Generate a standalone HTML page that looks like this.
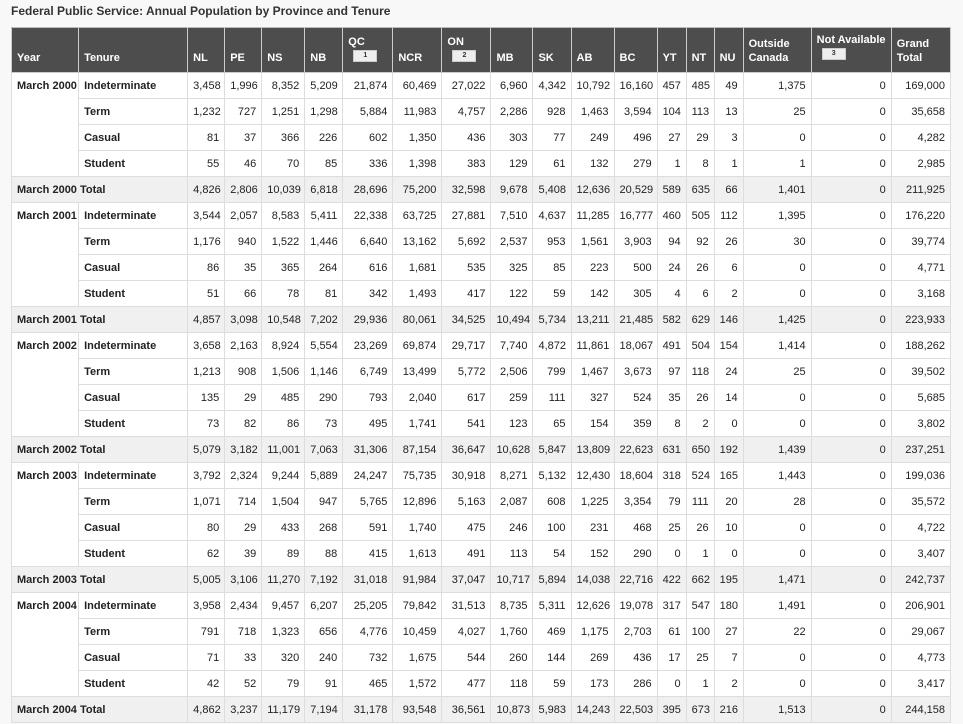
<!DOCTYPE html>
<html><head><meta charset="utf-8"><style>
body{margin:0;background:#f8f8f8;font-family:"Liberation Sans",Arial,sans-serif;font-size:11px;color:#222;width:963px;height:724px;overflow:hidden}
h1{position:absolute;left:11px;top:4px;margin:0;font-size:12px;font-weight:bold;color:#333}
table{position:absolute;left:11px;top:27px;border-collapse:collapse;table-layout:fixed;width:940px}
th{background:#4d4d4d;color:#fff;font-weight:bold;text-align:left;vertical-align:bottom;padding:0 5px 7px;height:37px;box-sizing:border-box;border:1px solid #ccc;border-top:1px solid #bbb;font-size:11px;line-height:14px}
tr.h{height:45px}
th.t{vertical-align:top;padding-top:7px}
.n{display:block;width:22px;height:10px;background:#eee;border:1px solid #ccc;color:#333;font-size:7px;line-height:10px;text-align:center;margin:1px 0 0 5px}
td{height:25px;padding:0 5px;border:1px solid #ddd;background:#fff;text-align:right;vertical-align:middle;line-height:14px;white-space:nowrap;overflow:visible}
td.l{text-align:left;font-weight:bold;vertical-align:top;padding-top:6px;padding-left:5px;padding-right:0}
td.b{text-align:left;font-weight:bold}
tr.tot td{background:#f0f0f0}
</style></head><body>
<h1>Federal Public Service: Annual Population by Province and Tenure</h1>
<table>
<colgroup><col style="width:67px"><col style="width:109px"><col style="width:37px"><col style="width:37px"><col style="width:43px"><col style="width:38px"><col style="width:50px"><col style="width:49px"><col style="width:49px"><col style="width:42px"><col style="width:38px"><col style="width:43px"><col style="width:43px"><col style="width:29px"><col style="width:28px"><col style="width:29px"><col style="width:68px"><col style="width:80px"><col style="width:59px"></colgroup>
<tr class="h"><th>Year</th><th>Tenure</th><th>NL</th><th>PE</th><th>NS</th><th>NB</th><th class="t">QC<span class="n">1</span></th><th>NCR</th><th class="t">ON<span class="n">2</span></th><th>MB</th><th>SK</th><th>AB</th><th>BC</th><th>YT</th><th>NT</th><th>NU</th><th>Outside Canada</th><th class="t" style="padding-top:5px">Not Available<span class="n">3</span></th><th>Grand Total</th></tr>
<tr><td class="l" rowspan="4">March 2000</td><td class="b">Indeterminate</td><td>3,458</td><td>1,996</td><td>8,352</td><td>5,209</td><td>21,874</td><td>60,469</td><td>27,022</td><td>6,960</td><td>4,342</td><td>10,792</td><td>16,160</td><td>457</td><td>485</td><td>49</td><td>1,375</td><td>0</td><td>169,000</td></tr>
<tr><td class="b">Term</td><td>1,232</td><td>727</td><td>1,251</td><td>1,298</td><td>5,884</td><td>11,983</td><td>4,757</td><td>2,286</td><td>928</td><td>1,463</td><td>3,594</td><td>104</td><td>113</td><td>13</td><td>25</td><td>0</td><td>35,658</td></tr>
<tr><td class="b">Casual</td><td>81</td><td>37</td><td>366</td><td>226</td><td>602</td><td>1,350</td><td>436</td><td>303</td><td>77</td><td>249</td><td>496</td><td>27</td><td>29</td><td>3</td><td>0</td><td>0</td><td>4,282</td></tr>
<tr><td class="b">Student</td><td>55</td><td>46</td><td>70</td><td>85</td><td>336</td><td>1,398</td><td>383</td><td>129</td><td>61</td><td>132</td><td>279</td><td>1</td><td>8</td><td>1</td><td>1</td><td>0</td><td>2,985</td></tr>
<tr class="tot"><td class="b" colspan="2">March 2000 Total</td><td>4,826</td><td>2,806</td><td>10,039</td><td>6,818</td><td>28,696</td><td>75,200</td><td>32,598</td><td>9,678</td><td>5,408</td><td>12,636</td><td>20,529</td><td>589</td><td>635</td><td>66</td><td>1,401</td><td>0</td><td>211,925</td></tr>
<tr><td class="l" rowspan="4">March 2001</td><td class="b">Indeterminate</td><td>3,544</td><td>2,057</td><td>8,583</td><td>5,411</td><td>22,338</td><td>63,725</td><td>27,881</td><td>7,510</td><td>4,637</td><td>11,285</td><td>16,777</td><td>460</td><td>505</td><td>112</td><td>1,395</td><td>0</td><td>176,220</td></tr>
<tr><td class="b">Term</td><td>1,176</td><td>940</td><td>1,522</td><td>1,446</td><td>6,640</td><td>13,162</td><td>5,692</td><td>2,537</td><td>953</td><td>1,561</td><td>3,903</td><td>94</td><td>92</td><td>26</td><td>30</td><td>0</td><td>39,774</td></tr>
<tr><td class="b">Casual</td><td>86</td><td>35</td><td>365</td><td>264</td><td>616</td><td>1,681</td><td>535</td><td>325</td><td>85</td><td>223</td><td>500</td><td>24</td><td>26</td><td>6</td><td>0</td><td>0</td><td>4,771</td></tr>
<tr><td class="b">Student</td><td>51</td><td>66</td><td>78</td><td>81</td><td>342</td><td>1,493</td><td>417</td><td>122</td><td>59</td><td>142</td><td>305</td><td>4</td><td>6</td><td>2</td><td>0</td><td>0</td><td>3,168</td></tr>
<tr class="tot"><td class="b" colspan="2">March 2001 Total</td><td>4,857</td><td>3,098</td><td>10,548</td><td>7,202</td><td>29,936</td><td>80,061</td><td>34,525</td><td>10,494</td><td>5,734</td><td>13,211</td><td>21,485</td><td>582</td><td>629</td><td>146</td><td>1,425</td><td>0</td><td>223,933</td></tr>
<tr><td class="l" rowspan="4">March 2002</td><td class="b">Indeterminate</td><td>3,658</td><td>2,163</td><td>8,924</td><td>5,554</td><td>23,269</td><td>69,874</td><td>29,717</td><td>7,740</td><td>4,872</td><td>11,861</td><td>18,067</td><td>491</td><td>504</td><td>154</td><td>1,414</td><td>0</td><td>188,262</td></tr>
<tr><td class="b">Term</td><td>1,213</td><td>908</td><td>1,506</td><td>1,146</td><td>6,749</td><td>13,499</td><td>5,772</td><td>2,506</td><td>799</td><td>1,467</td><td>3,673</td><td>97</td><td>118</td><td>24</td><td>25</td><td>0</td><td>39,502</td></tr>
<tr><td class="b">Casual</td><td>135</td><td>29</td><td>485</td><td>290</td><td>793</td><td>2,040</td><td>617</td><td>259</td><td>111</td><td>327</td><td>524</td><td>35</td><td>26</td><td>14</td><td>0</td><td>0</td><td>5,685</td></tr>
<tr><td class="b">Student</td><td>73</td><td>82</td><td>86</td><td>73</td><td>495</td><td>1,741</td><td>541</td><td>123</td><td>65</td><td>154</td><td>359</td><td>8</td><td>2</td><td>0</td><td>0</td><td>0</td><td>3,802</td></tr>
<tr class="tot"><td class="b" colspan="2">March 2002 Total</td><td>5,079</td><td>3,182</td><td>11,001</td><td>7,063</td><td>31,306</td><td>87,154</td><td>36,647</td><td>10,628</td><td>5,847</td><td>13,809</td><td>22,623</td><td>631</td><td>650</td><td>192</td><td>1,439</td><td>0</td><td>237,251</td></tr>
<tr><td class="l" rowspan="4">March 2003</td><td class="b">Indeterminate</td><td>3,792</td><td>2,324</td><td>9,244</td><td>5,889</td><td>24,247</td><td>75,735</td><td>30,918</td><td>8,271</td><td>5,132</td><td>12,430</td><td>18,604</td><td>318</td><td>524</td><td>165</td><td>1,443</td><td>0</td><td>199,036</td></tr>
<tr><td class="b">Term</td><td>1,071</td><td>714</td><td>1,504</td><td>947</td><td>5,765</td><td>12,896</td><td>5,163</td><td>2,087</td><td>608</td><td>1,225</td><td>3,354</td><td>79</td><td>111</td><td>20</td><td>28</td><td>0</td><td>35,572</td></tr>
<tr><td class="b">Casual</td><td>80</td><td>29</td><td>433</td><td>268</td><td>591</td><td>1,740</td><td>475</td><td>246</td><td>100</td><td>231</td><td>468</td><td>25</td><td>26</td><td>10</td><td>0</td><td>0</td><td>4,722</td></tr>
<tr><td class="b">Student</td><td>62</td><td>39</td><td>89</td><td>88</td><td>415</td><td>1,613</td><td>491</td><td>113</td><td>54</td><td>152</td><td>290</td><td>0</td><td>1</td><td>0</td><td>0</td><td>0</td><td>3,407</td></tr>
<tr class="tot"><td class="b" colspan="2">March 2003 Total</td><td>5,005</td><td>3,106</td><td>11,270</td><td>7,192</td><td>31,018</td><td>91,984</td><td>37,047</td><td>10,717</td><td>5,894</td><td>14,038</td><td>22,716</td><td>422</td><td>662</td><td>195</td><td>1,471</td><td>0</td><td>242,737</td></tr>
<tr><td class="l" rowspan="4">March 2004</td><td class="b">Indeterminate</td><td>3,958</td><td>2,434</td><td>9,457</td><td>6,207</td><td>25,205</td><td>79,842</td><td>31,513</td><td>8,735</td><td>5,311</td><td>12,626</td><td>19,078</td><td>317</td><td>547</td><td>180</td><td>1,491</td><td>0</td><td>206,901</td></tr>
<tr><td class="b">Term</td><td>791</td><td>718</td><td>1,323</td><td>656</td><td>4,776</td><td>10,459</td><td>4,027</td><td>1,760</td><td>469</td><td>1,175</td><td>2,703</td><td>61</td><td>100</td><td>27</td><td>22</td><td>0</td><td>29,067</td></tr>
<tr><td class="b">Casual</td><td>71</td><td>33</td><td>320</td><td>240</td><td>732</td><td>1,675</td><td>544</td><td>260</td><td>144</td><td>269</td><td>436</td><td>17</td><td>25</td><td>7</td><td>0</td><td>0</td><td>4,773</td></tr>
<tr><td class="b">Student</td><td>42</td><td>52</td><td>79</td><td>91</td><td>465</td><td>1,572</td><td>477</td><td>118</td><td>59</td><td>173</td><td>286</td><td>0</td><td>1</td><td>2</td><td>0</td><td>0</td><td>3,417</td></tr>
<tr class="tot"><td class="b" colspan="2">March 2004 Total</td><td>4,862</td><td>3,237</td><td>11,179</td><td>7,194</td><td>31,178</td><td>93,548</td><td>36,561</td><td>10,873</td><td>5,983</td><td>14,243</td><td>22,503</td><td>395</td><td>673</td><td>216</td><td>1,513</td><td>0</td><td>244,158</td></tr>
</table>
</body></html>
